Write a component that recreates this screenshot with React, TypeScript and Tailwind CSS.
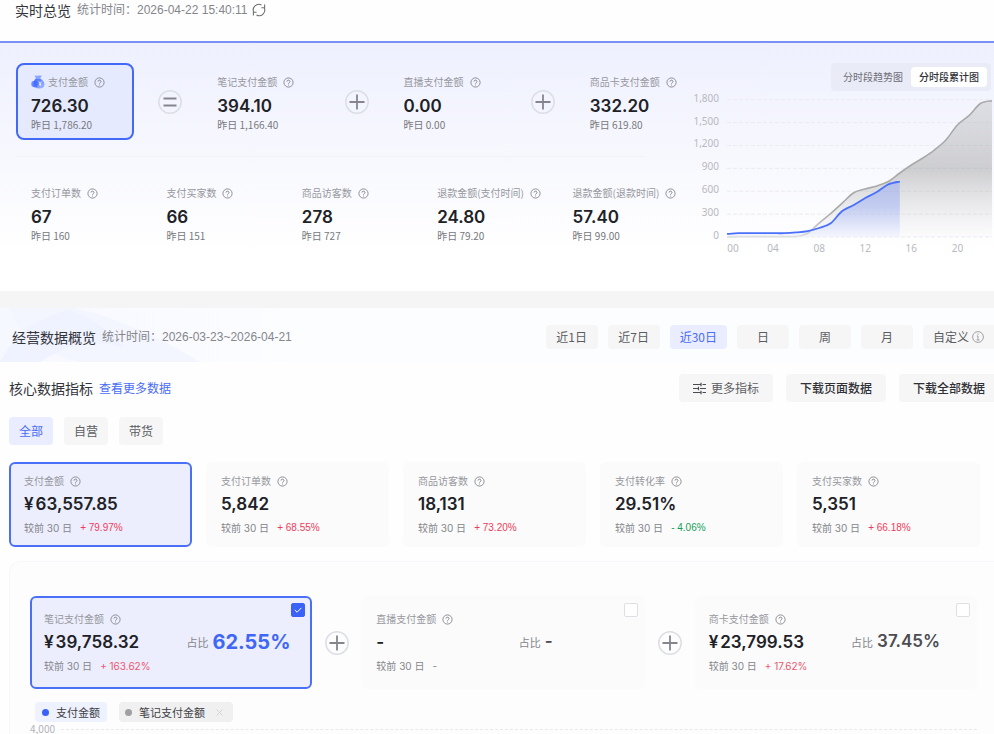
import { useState } from 'react';
import clsx from 'clsx';

const cjk = 'font-["Noto_Sans_CJK_SC",sans-serif]';
const arial = 'font-["Liberation_Sans","Noto_Sans_CJK_SC",sans-serif]';
const inter = 'font-[Inter,"Noto_Sans_CJK_SC",sans-serif]';

type Metric = { label: string; value: string; sub: string };

const formula: Metric[] = [
  { label: '支付金额', value: '726.30', sub: '1,786.20' },
  { label: '笔记支付金额', value: '394.10', sub: '1,166.40' },
  { label: '直播支付金额', value: '0.00', sub: '0.00' },
  { label: '商品卡支付金额', value: '332.20', sub: '619.80' },
];

const realtime: Metric[] = [
  { label: '支付订单数', value: '67', sub: '160' },
  { label: '支付买家数', value: '66', sub: '151' },
  { label: '商品访客数', value: '278', sub: '727' },
  { label: '退款金额(支付时间)', value: '24.80', sub: '79.20' },
  { label: '退款金额(退款时间)', value: '57.40', sub: '99.00' },
];

const core: Metric[] = [
  { label: '支付金额', value: '¥63,557.85', sub: '+ 79.97%' },
  { label: '支付订单数', value: '5,842', sub: '+ 68.55%' },
  { label: '商品访客数', value: '18,131', sub: '+ 73.20%' },
  { label: '支付转化率', value: '29.51%', sub: '- 4.06%' },
  { label: '支付买家数', value: '5,351', sub: '+ 66.18%' },
];

const channels = [
  { label: '笔记支付金额', value: '¥39,758.32', sub: '+ 163.62%', ratio: '62.55%' },
  { label: '直播支付金额', value: '-', sub: '-', ratio: '-' },
  { label: '商卡支付金额', value: '¥23,799.53', sub: '+ 17.62%', ratio: '37.45%' },
];

const ranges = ['近1日', '近7日', '近30日', '日', '周', '月'];

// 每小时累计支付金额
const yesterday = [0, 5, 5, 5, 5, 5, 8, 50, 183, 308, 445, 580, 630, 668, 727, 839, 944, 1035, 1140, 1271, 1468, 1590, 1750, 1786];
const today = [40, 50, 50, 50, 50, 50, 60, 78, 118, 180, 340, 419, 510, 590, 690, 726];

const px = (hour: number) => 37 + hour * 11.52;
const py = (value: number) => 146 - value * 0.0763;

function smoothPath(values: number[]) {
  const at = (i: number) => {
    const k = Math.max(0, Math.min(values.length - 1, i));
    return [px(k), py(values[k])];
  };
  let d = `M${px(0)} ${py(values[0])}`;
  for (let i = 0; i < values.length - 1; i++) {
    const [p0, p1, p2, p3] = [at(i - 1), at(i), at(i + 1), at(i + 2)];
    d += ` C${p1[0] + (p2[0] - p0[0]) / 6} ${p1[1] + (p2[1] - p0[1]) / 6} ${p2[0] - (p3[0] - p1[0]) / 6} ${p2[1] - (p3[1] - p1[1]) / 6} ${p2[0]} ${p2[1]}`;
  }
  return d;
}

function areaPath(values: number[]) {
  return `${smoothPath(values)} V${py(0)} H${px(0)} Z`;
}

function HelpIcon() {
  return (
    <svg className="size-[11px] shrink-0" viewBox="0 0 11 11" fill="none" stroke="#85868c" strokeWidth="0.9">
      <circle cx="5.5" cy="5.5" r="4.6" />
      <path d="M4 4.6a1.5 1.4 0 1 1 2.3 1.1c-.6.4-.8.6-.8 1.1M5.5 7.6v.9" />
    </svg>
  );
}

function MoneyBag() {
  return (
    <svg className="size-[14px] shrink-0" viewBox="0 0 14 14">
      <defs>
        <linearGradient id="bag" x1="0" y1="0" x2="1" y2="1">
          <stop offset="0" stopColor="#3f68ff" />
          <stop offset="1" stopColor="#a9bcff" />
        </linearGradient>
      </defs>
      <path d="M3.500 .6c1.500-.4 2 .5 3.200.2 1.400-.4 2.500-.6 4-.1L9.200 3.600H5z" fill="#8ea6ff" />
      <path d="M5 3.600h4.200c2.600 1.500 4.300 3.700 4.300 6 0 2.600-1.800 3.900-5.300 3.900S2.500 12.200 2.500 9.600C2.500 7.500 3 5.200 5 3.600z" fill="url(#bag)" />
      <circle cx="3.600" cy="9" r="3.300" fill="#3f68ff" opacity=".75" />
      <path d="M7.800 6.600l1.400 1.700 1.400-1.700M9.200 8.300v3M8 9.300h2.400" stroke="#fff" strokeWidth=".8" fill="none" />
    </svg>
  );
}

function Operator({ equal = false }: { equal?: boolean }) {
  return (
    <svg className="size-6 shrink-0" viewBox="0 0 24 24" fill="none">
      <circle cx="12" cy="12" r="11.200" stroke="#dcdee5" strokeWidth="1.500" />
      <path d={equal ? 'M5.500 8.500h13M5.500 15.500h13' : 'M4.500 12h15M12 4.500v15'} stroke="#85868d" strokeWidth={equal ? 2.200 : 1.800} />
    </svg>
  );
}

function RealtimeMetric({ item, active = false }: { item: Metric; active?: boolean }) {
  return (
    <div
      className={clsx(
        'min-w-0 rounded-lg border-2 pt-2 pb-[6px] pl-[13px] whitespace-nowrap',
        active ? 'border-[#4369f8] bg-[#e6eafe]' : 'border-transparent'
      )}
    >
      <div className="flex items-center gap-[6px] text-[10px] leading-[18px] text-[#97989e]">
        <span className="flex items-center gap-[3px]">
          {active && <MoneyBag />}
          {item.label}
        </span>
        <HelpIcon />
      </div>
      <div className={clsx(inter, 'mt-[3px] text-[17px] leading-6 font-semibold text-[#202126]')}>{item.value}</div>
      <div className="text-[10px] leading-[14px] text-[#77787d]">昨日 {item.sub}</div>
    </div>
  );
}

function HourChart() {
  return (
    <svg className="block w-full" viewBox="3 0 301 165" role="img" aria-label="分时段累计图">
      <defs>
        <linearGradient id="gray" x1="0" y1="0" x2="0" y2="1">
          <stop offset="0" stopColor="#aaa" stopOpacity=".3" />
          <stop offset=".5" stopColor="#999" stopOpacity=".45" />
          <stop offset="1" stopColor="#bbb" stopOpacity=".03" />
        </linearGradient>
        <linearGradient id="blue" x1="0" y1="0" x2="0" y2="1">
          <stop offset="0" stopColor="#93a8f5" stopOpacity=".5" />
          <stop offset=".45" stopColor="#93a8f5" stopOpacity=".45" />
          <stop offset="1" stopColor="#eef1ff" stopOpacity=".5" />
        </linearGradient>
        <linearGradient id="line" gradientUnits="userSpaceOnUse" x1="37" y1="0" x2="140" y2="0">
          <stop offset="0" stopColor="#dedfe2" />
          <stop offset=".7" stopColor="#dedfe2" />
          <stop offset="1" stopColor="#a9a9aa" />
        </linearGradient>
      </defs>
      {[0, 300, 600, 900, 1200, 1500, 1800].map((tick) => (
        <g key={tick}>
          <path d={`M37 ${py(tick)}H302`} stroke="#eaebf0" strokeDasharray="4 2" />
          <text x="29" y={py(tick) + 2} textAnchor="end" fontSize="10" fill="#b8b9be" fontFamily="Noto Sans">
            {tick.toLocaleString('en-US')}
          </text>
        </g>
      ))}
      <path d={areaPath(yesterday)} fill="url(#gray)" />
      <path d={areaPath(today)} fill="url(#blue)" />
      <path d={smoothPath(yesterday)} fill="none" stroke="url(#line)" strokeWidth="1.600" />
      <path d={smoothPath(today)} fill="none" stroke="#4a70fa" strokeWidth="1.800" />
      {[0, 4, 8, 12, 16, 20].map((hour) => (
        <text key={hour} x={hour ? px(hour) : 43} y="161" textAnchor="middle" fontSize="10" fill="#b8b9be" fontFamily="Noto Sans">
          {String(hour).padStart(2, '0')}
        </text>
      ))}
    </svg>
  );
}

function RealtimeSection() {
  const [mode, setMode] = useState('分时段累计图');

  return (
    <section>
      <header className="flex h-[41px] items-start bg-[#fefefe] pl-[15px] leading-5">
        <h2 className="text-sm leading-5 text-[#33343a]">实时总览</h2>
        <span className={clsx(arial, 'ml-[6px] text-xs leading-5 text-[#85868b]')}>统计时间：2026-04-22 15:40:11</span>
        <button type="button" aria-label="刷新" className="ml-1 flex h-5 items-center">
          <svg className="size-[14px]" viewBox="0 0 14 14" fill="none" stroke="#707176" strokeWidth="1.100">
            <path d="M1.900 9.500A5.600 5.600 0 0 1 9.500 2M12.100 4.500A5.600 5.600 0 0 1 4.500 12M12.600 1.500v3.300H9.400M1.400 12.500V9.200h3.200" />
          </svg>
        </button>
      </header>
      <div className="flex border-t-2 border-[#7890f8] bg-linear-to-b from-[#eef0fe] via-[#f7f8fe] via-45% to-white to-85% pt-5 pb-[35px]">
        <div className="min-w-0 flex-1 pl-4">
          <div className="flex items-center">
            {formula.map((item, i) => (
              <div key={item.label} className={clsx('flex items-center', i === 0 ? 'flex-1' : 'flex-[1_1_68px]')}>
                {i > 0 && (
                  <div className="mr-5 ml-6 shrink-0">
                    <Operator equal={i === 1} />
                  </div>
                )}
                <div className="min-w-0 flex-1">
                  <RealtimeMetric item={item} active={i === 0} />
                </div>
              </div>
            ))}
          </div>
          <hr className="mt-4 mr-12 border-[#f1f3f9]" />
          <div className="mt-[17px] grid grid-cols-5">
            {realtime.map((item) => (
              <RealtimeMetric key={item.label} item={item} />
            ))}
          </div>
        </div>
        <div className="w-[301px] shrink-0">
          <div className="mr-[3px] ml-auto flex w-fit rounded bg-[#e9ebf7] p-1">
            {['分时段趋势图', '分时段累计图'].map((name) => (
              <button
                key={name}
                type="button"
                onClick={() => setMode(name)}
                className={clsx(
                  'rounded-sm px-2 text-[10px] leading-5',
                  mode === name ? 'bg-white font-medium text-[#303136]' : 'text-[#6d6e76]'
                )}
              >
                {name}
              </button>
            ))}
          </div>
          <HourChart />
        </div>
      </div>
    </section>
  );
}

function OverviewHeader() {
  const [range, setRange] = useState('近30日');

  return (
    <header className="relative flex h-[54px] items-center justify-between bg-[#fcfdff] pt-1 pl-3">
      <svg className="absolute top-0 left-0 h-full w-[300px]" viewBox="0 0 300 54" preserveAspectRatio="none">
        <defs>
          <linearGradient id="fade" x1="0" y1="0" x2="1" y2="0">
            <stop offset="0" stopColor="#f6f8ff" />
            <stop offset=".4" stopColor="#f8faff" />
            <stop offset="1" stopColor="#fcfdff" />
          </linearGradient>
        </defs>
        <rect width="300" height="54" fill="url(#fade)" />
        <path d="M9 0H75Q135 14 200 54H80Q24 42 9 0z" fill="#f4f6ff" />
        <path d="M0 54Q20 14 68 2Q104 14 124 40Q84 26 40 54z" fill="#eef1ff" opacity=".8" />
      </svg>
      <div className="relative flex items-center gap-[6px]">
        <h2 className="text-sm leading-5 text-[#33343a]">经营数据概览</h2>
        <span className={clsx(arial, 'text-xs leading-5 text-[#85868b]')}>统计时间：2026-03-23~2026-04-21</span>
      </div>
      <div className="relative flex gap-[10px] text-xs leading-6">
        {ranges.map((name) => (
          <button
            key={name}
            type="button"
            onClick={() => setRange(name)}
            className={clsx(
              'min-w-[52px] rounded px-[10px]',
              range === name ? 'bg-[#e9edff] text-[#4a6cf7]' : 'bg-[#f6f6f7] text-[#5c5d62]'
            )}
          >
            {name}
          </button>
        ))}
        <button type="button" className="flex items-center gap-[3px] rounded-l bg-[#f6f6f7] px-[10px] text-[#5c5d62]">
          自定义
          <svg className="size-3" viewBox="0 0 12 12" fill="none" stroke="#98999e" strokeWidth=".9">
            <circle cx="6" cy="6" r="5.400" />
            <path d="M6 2.500v1.200M4.800 5H6v4M4.600 9h2.900" />
          </svg>
        </button>
      </div>
    </header>
  );
}

function Amount({ value }: { value: string }) {
  const yuan = value.startsWith('¥');
  return (
    <div className={clsx(inter, 'mt-[2px] flex gap-[2px] text-[17px] leading-6 font-semibold text-[#202126]')}>
      {yuan && <span>¥</span>}
      <span>{yuan ? value.slice(1) : value}</span>
    </div>
  );
}

function CoreCard({ item, active }: { item: Metric; active: boolean }) {
  return (
    <div
      className={clsx(
        'rounded-md border-2 px-[13px] py-2 whitespace-nowrap',
        active ? 'border-[#4a70f8] bg-[#eceefd]' : 'border-transparent bg-[#fbfbfb]'
      )}
    >
      <div className="flex items-center gap-[6px] text-[10px] leading-[18px] text-[#97989e]">
        {item.label}
        <HelpIcon />
      </div>
      <Amount value={item.value} />
      <div className="mt-[3px] flex gap-2 text-[10px] leading-[18px] text-[#85868b]">
        <span className={inter}>较前 30 日</span>
        <span className={clsx(arial, item.sub.startsWith('-') ? 'text-[#18a058]' : 'text-[#ee3b5b]')}>{item.sub}</span>
      </div>
    </div>
  );
}

function ChannelCard({ item, initial }: { item: (typeof channels)[number]; initial: boolean }) {
  const [checked, setChecked] = useState(initial);

  return (
    <label
      className={clsx(
        'relative block min-w-0 flex-1 rounded-md border-2 px-3 pt-3 pb-3 whitespace-nowrap',
        checked ? 'border-[#4a70f8] bg-[#eceefd]' : 'border-transparent bg-[#fbfbfb]'
      )}
    >
      <input
        type="checkbox"
        checked={checked}
        onChange={(e) => setChecked(e.target.checked)}
        className="absolute top-[5px] right-[5px] size-[14px] appearance-none rounded-xs border border-[#dfe0e4] bg-white checked:border-[#3b62f6] checked:bg-[#3b62f6]"
      />
      {checked && (
        <svg className="pointer-events-none absolute top-[5px] right-[5px] size-[14px]" viewBox="0 0 14 14" fill="none" stroke="#fff">
          <path d="M3.800 7l2.300 2.200 4.200-4.300" />
        </svg>
      )}
      <span className="flex items-center gap-[6px] text-[10px] leading-[18px] text-[#97989e]">
        {item.label}
        <HelpIcon />
      </span>
      <div className="flex items-center">
        <div className="w-[56%]">
          <Amount value={item.value} />
        </div>
        <div className="mt-[2px] flex h-6 items-center gap-1 text-[11px] text-[#85868b]">
          占比
          <span className={clsx(inter, checked ? 'text-xl font-bold text-[#4066f5]' : 'text-[17px] font-semibold text-[#4c4d52]')}>
            {item.ratio}
          </span>
        </div>
      </div>
      <div className={clsx(inter, 'mt-[3px] flex gap-2 text-[10px] leading-[18px] text-[#85868b]')}>
        <span>较前 30 日</span>
        <span className={item.sub === '-' ? '' : 'text-[#e95770]'}>{item.sub}</span>
      </div>
    </label>
  );
}

function CoreSection() {
  const [tab, setTab] = useState('全部');

  return (
    <section className="pt-3">
      <div className="flex items-center justify-between pl-[9px]">
        <div className="flex items-center gap-[6px]">
          <h3 className="text-sm text-[#33343a]">核心数据指标</h3>
          <a href="#more" className="text-xs text-[#4a6cf7]">查看更多数据</a>
        </div>
        <div className="flex gap-[13px] text-xs leading-7 text-[#303136]">
          <button type="button" className="flex items-center gap-[5px] rounded bg-[#f6f6f7] px-[14px] text-[#5c5d62]">
            <svg className="size-[13px]" viewBox="0 0 13 13" fill="none" stroke="#4b4c51" strokeWidth="1.200">
              <path d="M0 2.500h7.500M9.500 2.500H13M0 6.500h5M7 6.500h6M0 10.500h7.500M9.500 10.500H13M8 .8v3.400M5.500 4.800v3.400M8 8.800v3.400" />
            </svg>
            更多指标
          </button>
          <button type="button" className="rounded bg-[#f6f6f7] px-[14px] font-medium">下载页面数据</button>
          <button type="button" className="rounded-l bg-[#f6f6f7] pr-[9px] pl-[14px] font-medium">下载全部数据</button>
        </div>
      </div>

      <div className="mt-[15px] flex gap-[11px] pl-[9px] text-xs leading-7">
        {['全部', '自营', '带货'].map((name) => (
          <button
            key={name}
            type="button"
            onClick={() => setTab(name)}
            className={clsx('rounded px-[10px]', tab === name ? 'bg-[#e9edff] text-[#4a6cf7]' : 'bg-[#f6f6f7] text-[#5c5d62]')}
          >
            {name}
          </button>
        ))}
      </div>

      <div className="mt-[17px] grid grid-cols-5 gap-[14px] pr-[14px] pl-[9px]">
        {core.map((item, i) => (
          <CoreCard key={item.label} item={item} active={i === 0} />
        ))}
      </div>

      <div className="mt-[14px] ml-[9px] rounded-tl-xl border-t border-l border-[#f6f6fd] bg-[#fdfdfe] pt-[34px] pr-[17px] pl-5">
        <div className="flex items-center gap-[13px]">
          {channels.map((item, i) => [
            i > 0 && <Operator key={`${item.label}-plus`} />,
            <ChannelCard key={item.label} item={item} initial={i === 0} />,
          ])}
        </div>
        <div className="mt-[13px] flex gap-3 pl-[5px] text-[11px] leading-5 text-[#404146]">
          <span className="flex items-center gap-[7px] rounded-sm bg-[#eef1fe] px-[7px]">
            <i className="size-[7px] rounded-full bg-[#3b62f6]" />
            支付金额
          </span>
          <span className="flex items-center gap-[7px] rounded-sm bg-[#f0f0f1] px-[6px]">
            <i className="size-[7px] rounded-full bg-[#a0a0a2]" />
            笔记支付金额
            <button type="button" aria-label="移除" className="px-1">
              <svg className="size-[7px]" viewBox="0 0 7 7" stroke="#cfd0d3" strokeWidth=".9">
                <path d="M.5.5l6 6M6.500.5l-6 6" />
              </svg>
            </button>
          </span>
        </div>
        <div className="mt-[2px] flex items-center gap-[6px] text-[10px] leading-[10px] text-[#b3b4ba]">
          4,000
          <div className="flex-1 border-t border-dashed border-[#e9e9ed]" />
        </div>
      </div>
    </section>
  );
}

export default function App() {
  return (
    <main className={clsx(cjk, 'min-h-screen overflow-x-hidden bg-[#fefefe]')}>
      <RealtimeSection />
      <div className="h-[17px] bg-[#f5f5f6]" />
      <OverviewHeader />
      <CoreSection />
    </main>
  );
}
